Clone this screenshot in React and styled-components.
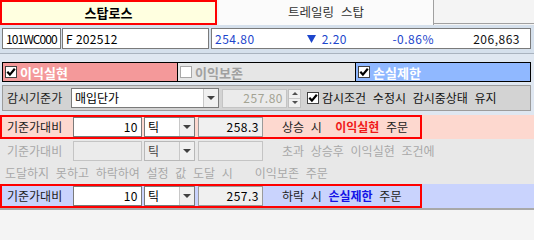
import React from "react";
import styled, { createGlobalStyle, css } from "styled-components";

const GlobalStyle = createGlobalStyle`
  html, body { margin: 0; padding: 0; }
  body {
    width: 534px; height: 210px; overflow: hidden;
    background: #f4f4f4;
    font-family: "Noto Sans CJK KR", "Noto Sans", sans-serif;
    font-size: 12px; color: #000;
  }
  * { box-sizing: border-box; }
`;

const Window = styled.div`
  width: 534px;
  height: 210px;
  display: flex;
  flex-direction: column;
`;

/* ---------- tabs ---------- */
const TabBar = styled.div`
  flex: none;
  display: flex;
  height: 25px;
  background: #f4f4f4;
`;
const ActiveTab = styled.div`
  width: 217px;
  height: 25px;
  background: #ffffe0;
  border: 2px solid #ff0000;
  display: flex;
  align-items: center;
  justify-content: center;
  font-size: 13px;
  font-weight: 700;
  line-height: 1;
`;
const Tab = styled.div`
  margin-left: 2px;
  width: 215px;
  height: 25px;
  background: #fbfbfb;
  border-right: 1px solid #a0a0a0;
  display: flex;
  align-items: center;
  justify-content: center;
  color: #333;
  font-size: 12.5px;
  line-height: 1;
  word-spacing: 4px;
`;
const TabFill = styled.div`
  flex: 1;
  height: 24px;
  border-bottom: 1px solid #a0a0a0;
`;

/* ---------- quote row ---------- */
const InfoSection = styled.div`
  flex: none;
  height: 29px;
  background: #d5e0ec;
  border-bottom: 1px solid #a9b3bf;
  display: flex;
  align-items: flex-start;
  padding: 3px 0 0 2px;
  gap: 1px;
`;
const Field = styled.div`
  width: ${(p) => p.$w}px;
  height: 21px;
  background: #fff;
  border: 1px solid #7a7a7a;
  display: flex;
  align-items: center;
  padding-left: 3px;
  line-height: 1;
  white-space: pre;
  overflow: hidden;
  letter-spacing: ${(p) => p.$tight ? "-0.9px" : "0.3px"};
`;
const QuoteField = styled.div`
  margin-left: 1px;
  width: 320px;
  height: 21px;
  background: #fff;
  border: 1px solid #7a7a7a;
  display: grid;
  grid-template-columns: 1fr auto 87px 86px;
  align-items: center;
  padding: 0 10px 0 3px;
  line-height: 1;
  letter-spacing: 0.5px;
`;
const QuoteCell = styled.span`
  display: flex;
  align-items: center;
  justify-content: ${(p) => (p.$left ? "flex-start" : "flex-end")};
  color: ${(p) => (p.$blue ? "#1d46cc" : "#111")};
`;
const DownMark = styled.svg`
  margin-right: 6px;
`;

/* ---------- lower area ---------- */
const Lower = styled.div`
  flex: 1;
  display: flex;
  flex-direction: column;
  background: #dfe7f1;
`;

const CheckRow = styled.div`
  margin: 8px 0 0 2px;
  width: 529px;
  height: 20px;
  border: 1px solid #000;
  display: flex;
`;
const segTones = {
  pink: css`background: #f4999a; color: #fff;`,
  gray: css`background: #e6e6e6; color: #a0a0a0;`,
  blue: css`background: #90b8ff; color: #fff;`,
};
const Segment = styled.div`
  width: ${(p) => p.$w}px;
  height: 18px;
  display: flex;
  align-items: center;
  padding-left: 2px;
  gap: 3px;
  font-size: 13px;
  font-weight: 700;
  line-height: 1;
  ${(p) => segTones[p.$tone]};
  ${(p) => p.$divider && css`border-left: 1px solid #000;`}
`;
const CheckFrame = styled.span`
  flex: none;
  width: 12px;
  height: 12px;
  background: #fff;
  border: 1px solid ${(p) => (p.$muted ? "#a8a8a8" : "#404040")};
  display: flex;
  align-items: center;
  justify-content: center;
`;

const WatchRow = styled.div`
  margin: 3px 0 0 2px;
  width: 529px;
  height: 26px;
  background: #d3d3d3;
  border: 1px solid #9c9c9c;
  display: flex;
  align-items: center;
  padding-left: 4px;
  line-height: 1;
`;
const WatchLabel = styled.span`
  width: 64px;
  flex: none;
  color: #222;
`;
const SelectBox = styled.div`
  flex: none;
  width: ${(p) => p.$w}px;
  height: ${(p) => p.$h || 20}px;
  margin-left: ${(p) => p.$ml || 0}px;
  display: flex;
  border: 1px solid ${(p) => (p.$disabled ? "#b8b8b8" : "#7a7a7a")};
  background: ${(p) => (p.$disabled ? "#ececec" : "#fff")};
`;
const SelectText = styled.span`
  flex: 1;
  display: flex;
  align-items: center;
  padding-left: 3px;
  color: ${(p) => (p.$muted ? "#444" : "#000")};
`;
const DropButton = styled.span`
  flex: none;
  width: 15px;
  background: #f0f0f0;
  border-left: 1px solid #c8c8c8;
  display: flex;
  align-items: center;
  justify-content: center;
  &::after {
    content: "";
    border-left: 4px solid transparent;
    border-right: 4px solid transparent;
    border-top: 4px solid #404040;
  }
`;
const ValueBox = styled.div`
  flex: none;
  width: ${(p) => p.$w}px;
  height: ${(p) => p.$h || 20}px;
  margin-left: ${(p) => p.$ml || 0}px;
  display: flex;
  align-items: center;
  justify-content: flex-end;
  padding-right: 3px;
  letter-spacing: 0.5px;
  border: 1px solid ${(p) => (p.$tone === "white" ? "#7a7a7a" : p.$tone === "read" ? "#9a9a9a" : "#c4c4c4")};
  background: ${(p) => (p.$tone === "white" ? "#fff" : p.$tone === "read" ? "#f0f0f0" : "#ebebeb")};
  color: ${(p) => (p.$tone === "off" ? "#a3a393" : "#000")};
`;
const Spinner = styled.div`
  flex: none;
  margin-left: 1px;
  width: 13px;
  height: 19px;
  display: flex;
  flex-direction: column;
  border: 1px solid #c0c0c0;
  background: #f0f0f0;
`;
const SpinHalf = styled.span`
  flex: 1;
  display: flex;
  align-items: center;
  justify-content: center;
  ${(p) => p.$down && css`border-top: 1px solid #c8c8c8;`}
  &::after {
    content: "";
    border-left: 3px solid transparent;
    border-right: 3px solid transparent;
    ${(p) => (p.$down ? css`border-top: 3px solid #505050;` : css`border-bottom: 3px solid #505050;`)}
  }
`;
const WatchCheck = styled.span`
  margin-left: 6px;
  display: flex;
  align-items: center;
  gap: 3px;
  color: #111;
  white-space: pre;
  word-spacing: 4px;
`;

const Gap = styled.div`
  height: 4px;
  flex: none;
`;

const bandTones = { pink: "#fdd8cf", gray: "#e8e8e8", blue: "#c9d3fd" };
const Band = styled.div`
  flex: none;
  background: ${(p) => bandTones[p.$tone]};
  display: flex;
  flex-direction: column;
`;
const OrderRow = styled.div`
  width: 422px;
  height: ${(p) => p.$h || 24}px;
  border: 2px solid ${(p) => (p.$framed ? "#ff0000" : "transparent")};
  display: flex;
  align-items: center;
  padding-left: 5px;
  line-height: 1;
`;
const RowLabel = styled.span`
  width: 66px;
  flex: none;
  color: ${(p) => (p.$muted ? "#a8a8a8" : "#222")};
`;
const Message = styled.span`
  margin-left: 19px;
  white-space: pre;
  word-spacing: 4px;
  color: ${(p) => (p.$muted ? "#a8a8a8" : "#222")};
`;
const Strong = styled.b`
  color: ${(p) => p.$color};
  font-weight: 700;
`;
const NoteLine = styled.div`
  height: 22px;
  display: flex;
  align-items: center;
  padding-left: 5px;
  color: #a8a8a8;
  white-space: pre;
  word-spacing: 4px;
  line-height: 1;
`;
const NoteTail = styled.span`
  margin-left: 22px;
`;
const BottomEdge = styled.div`
  flex: none;
  height: 2px;
  background: #a8a8a8;
`;

function Checkbox({ checked, muted }) {
  return (
    <CheckFrame $muted={muted}>
      {checked && (
        <svg width="10" height="10" viewBox="0 0 10 10">
          <path d="M1.3 4.8 L3.9 7.6 L8.8 1.8" fill="none" stroke="#000" strokeWidth="2.2" />
        </svg>
      )}
    </CheckFrame>
  );
}

function Dropdown({ w, text, disabled, muted, ml, h }) {
  return (
    <SelectBox $w={w} $disabled={disabled} $ml={ml} $h={h}>
      <SelectText $muted={muted}>{text}</SelectText>
      <DropButton />
    </SelectBox>
  );
}

function PriceControls({ qty, price, disabled }) {
  return (
    <>
      <RowLabel $muted={disabled}>기준가대비</RowLabel>
      <ValueBox $w={69} $tone={disabled ? "off" : "white"}>{qty}</ValueBox>
      <Dropdown w={51} ml={2} text="틱" disabled={disabled} muted={disabled} />
      <ValueBox $w={65} $ml={3} $tone={disabled ? "off" : "read"}>{price}</ValueBox>
    </>
  );
}

export default function App() {
  return (
    <>
      <GlobalStyle />
      <Window>
        <TabBar>
          <ActiveTab>스탑로스</ActiveTab>
          <Tab>트레일링 스탑</Tab>
          <TabFill />
        </TabBar>

        <InfoSection>
          <Field $w={59} $tight>101WC000</Field>
          <Field $w={147}>F 202512</Field>
          <QuoteField>
            <QuoteCell $left $blue>254.80</QuoteCell>
            <QuoteCell $blue>
              <DownMark width="9" height="8" viewBox="0 0 9 8">
                <polygon points="0,0 9,0 4.5,8" fill="#1d46cc" />
              </DownMark>
              2.20
            </QuoteCell>
            <QuoteCell $blue>-0.86%</QuoteCell>
            <QuoteCell>206,863</QuoteCell>
          </QuoteField>
        </InfoSection>

        <Lower>
          <CheckRow>
            <Segment $w={174} $tone="pink">
              <Checkbox checked />
              이익실현
            </Segment>
            <Segment $w={178} $tone="gray" $divider>
              <Checkbox muted />
              이익보존
            </Segment>
            <Segment $w={175} $tone="blue" $divider>
              <Checkbox checked />
              손실제한
            </Segment>
          </CheckRow>

          <WatchRow>
            <WatchLabel>감시기준가</WatchLabel>
            <Dropdown w={148} h={20} text="매입단가" />
            <ValueBox $w={65} $ml={3} $h={19} $tone="off">257.80</ValueBox>
            <Spinner>
              <SpinHalf />
              <SpinHalf $down />
            </Spinner>
            <WatchCheck>
              <Checkbox checked />
              감시조건 수정시 감시중상태 유지
            </WatchCheck>
          </WatchRow>

          <Gap />

          <Band $tone="pink">
            <OrderRow $framed>
              <PriceControls qty="10" price="258.3" />
              <Message>
                {"상승 시  "}
                <Strong $color="#f01818">이익실현</Strong>
                {" 주문"}
              </Message>
            </OrderRow>
          </Band>

          <Band $tone="gray">
            <OrderRow $h={23}>
              <PriceControls qty="" price="" disabled />
              <Message $muted>초과 상승후 이익실현 조건에</Message>
            </OrderRow>
            <NoteLine>
              도달하지 못하고 하락하여 설정 값 도달 시
              <NoteTail>이익보존 주문</NoteTail>
            </NoteLine>
          </Band>

          <Band $tone="blue">
            <OrderRow $framed>
              <PriceControls qty="10" price="257.3" />
              <Message>
                {"하락 시 "}
                <Strong $color="#1414e6">손실제한</Strong>
                {" 주문"}
              </Message>
            </OrderRow>
          </Band>

          <BottomEdge />
        </Lower>
      </Window>
    </>
  );
}
